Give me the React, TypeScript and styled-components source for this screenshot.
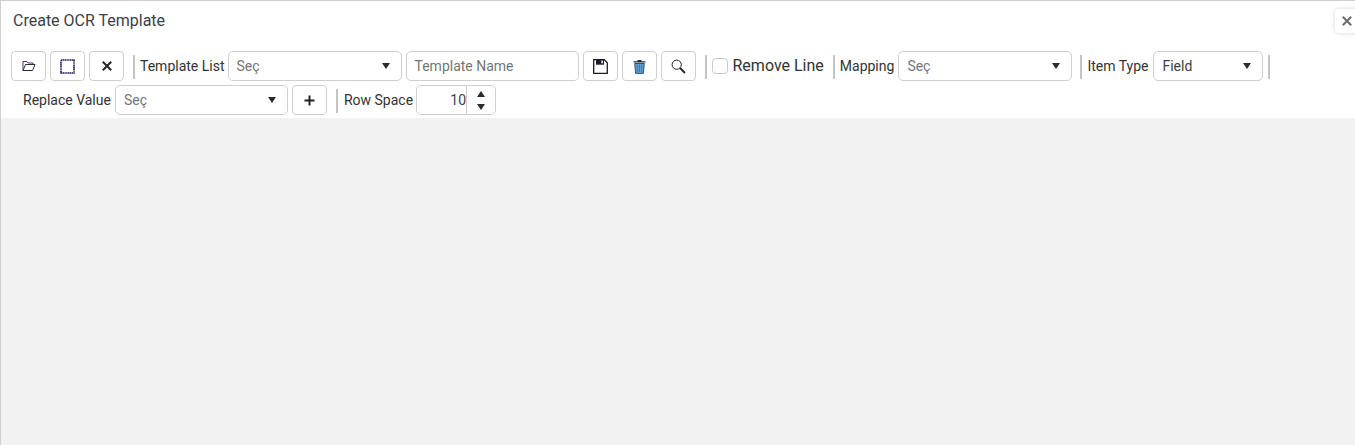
import React from "react";
import styled, { createGlobalStyle } from "styled-components";

const Global = createGlobalStyle`
  html, body { margin: 0; padding: 0; background: #fff; }
  body { font-family: Roboto, "Liberation Sans", sans-serif; color: #333; }
`;

const Page = styled.div`
  width: 1355px;
  height: 445px;
  box-sizing: border-box;
  border-top: 1px solid #cfcfcf;
  border-left: 1px solid #cfcfcf;
  display: flex;
  flex-direction: column;
  position: relative;
  overflow: hidden;
`;

const Header = styled.div`
  height: 50px;
  padding: 10px 0 0 12px;
  box-sizing: border-box;
  font-size: 16px;
  line-height: 19px;
  color: #3a3f44;
`;

const CloseButton = styled.button`
  position: absolute;
  top: 8px;
  right: -8px;
  width: 28px;
  height: 24px;
  padding: 0 5px 0 0;
  border: 0;
  border-radius: 4px;
  background: #fff;
  box-shadow: 0 0 5px rgba(0, 0, 0, 0.16);
  display: flex;
  align-items: center;
  justify-content: center;
`;

const Toolbar = styled.div`
  display: flex;
  flex-wrap: wrap;
  align-items: center;
  row-gap: 4px;
  padding: 0 0 3px 10px;
  background: #fff;
`;

const IconButton = styled.button`
  width: 35px;
  height: 30px;
  margin-right: 4px;
  padding: 0;
  box-sizing: border-box;
  background: #fff;
  border: 1px solid #cfcfcf;
  border-radius: 4px;
  display: flex;
  align-items: center;
  justify-content: center;
  flex: none;
`;

const Separator = styled.span<{ $before?: number; $after?: number }>`
  width: 2px;
  height: 24px;
  background: #c4c4c4;
  flex: none;
  margin-top: 2px;
  margin-left: ${(p) => p.$before ?? 5}px;
  margin-right: ${(p) => p.$after ?? 5}px;
`;

const Label = styled.label<{ $indent?: number; $gap?: number }>`
  font-size: 14px;
  line-height: 30px;
  color: #333;
  margin-left: ${(p) => p.$indent ?? 0}px;
  margin-right: ${(p) => p.$gap ?? 3}px;
  white-space: nowrap;
  flex: none;
`;

const SelectBox = styled.div<{ $width: number }>`
  width: ${(p) => p.$width}px;
  height: 30px;
  margin-right: 4px;
  box-sizing: border-box;
  border: 1px solid #cfcfcf;
  border-radius: 5px;
  background: #fff;
  display: flex;
  align-items: center;
  flex: none;
`;

const SelectValue = styled.span<{ $muted?: boolean }>`
  flex: 1;
  padding-left: 8px;
  font-size: 14px;
  color: ${(p) => (p.$muted ? "#757575" : "#3a3f44")};
`;

const Caret = styled.span`
  width: 0;
  height: 0;
  margin-right: 11px;
  border-left: 4px solid transparent;
  border-right: 4px solid transparent;
  border-top: 6px solid #2b2b2b;
`;

const TextBox = styled.div`
  width: 173px;
  height: 30px;
  margin-right: 4px;
  box-sizing: border-box;
  border: 1px solid #cfcfcf;
  border-radius: 5px;
  padding-left: 8px;
  font-size: 14px;
  line-height: 28px;
  color: #757575;
  flex: none;
`;

const CheckGroup = styled.div`
  display: flex;
  align-items: center;
  gap: 5px;
  flex: none;
`;

const CheckBox = styled.span`
  width: 16px;
  height: 16px;
  box-sizing: border-box;
  border: 1px solid #c9c9c9;
  border-radius: 4px;
  background: #fff;
`;

const CheckLabel = styled.span`
  font-size: 16px;
  line-height: 30px;
  color: #333;
`;

const Spinner = styled.div`
  width: 80px;
  height: 30px;
  box-sizing: border-box;
  border: 1px solid #cfcfcf;
  border-radius: 5px;
  display: flex;
  flex: none;
`;

const SpinnerValue = styled.span`
  width: 50px;
  box-sizing: border-box;
  border-right: 1px solid #cfcfcf;
  text-align: right;
  font-size: 14px;
  line-height: 28px;
  color: #3a3f44;
`;

const SpinnerArrows = styled.span`
  flex: 1;
  display: flex;
  flex-direction: column;
  align-items: center;
  justify-content: center;
  gap: 7px;
`;

const Arrow = styled.span<{ $up?: boolean }>`
  width: 0;
  height: 0;
  border-left: 4px solid transparent;
  border-right: 4px solid transparent;
  border-top: ${(p) => (p.$up ? "0" : "6px solid #2b2b2b")};
  border-bottom: ${(p) => (p.$up ? "6px solid #2b2b2b" : "0")};
`;

const Canvas = styled.div`
  flex: 1;
  background: #f2f2f2;
`;

const FolderIcon = () => (
  <svg width="14" height="12" viewBox="0 0 14 12" fill="none" stroke="#2a2a3a" strokeWidth="1">
    <path d="M1 10.5V1.5h4l1 1.5h5v1.5" stroke="#5a2a6a" />
    <path d="M1 10.5h9.5L13 4.5H3.5L1 10.5z" />
  </svg>
);
const SquareIcon = () => (
  <svg width="15" height="15" viewBox="0 0 15 15" fill="none">
    <rect x="1" y="1" width="13" height="13" stroke="#2a1a5a" strokeWidth="1.6" strokeDasharray="1.4 0.4" />
  </svg>
);
const CrossIcon = ({ color = "#222", size = 10, w = 2 }: { color?: string; size?: number; w?: number }) => (
  <svg width={size} height={size} viewBox="0 0 10 10" stroke={color} strokeWidth={w}>
    <path d="M0.8 0.8l8.4 8.4M9.2 0.8L0.8 9.2" />
  </svg>
);
const SaveIcon = () => (
  <svg width="15" height="15" viewBox="0 0 15 15">
    <path d="M0.7 0.7h10.6l3 3v10.6H0.7z" fill="#fff" stroke="#1c1c2a" strokeWidth="1.3" />
    <rect x="3" y="0.7" width="8" height="5" fill="#1c1c2a" />
    <rect x="8.4" y="1.5" width="1.5" height="2.8" fill="#fff" />
  </svg>
);
const TrashIcon = () => (
  <svg width="13" height="15" viewBox="0 0 13 15">
    <path d="M4.5 1h4v1.2h4V3.6H.5V2.2h4z" fill="#23303a" />
    <path d="M1.7 4.5h9.6L10.4 14.4H2.6z" fill="#5fa3d6" stroke="#23303a" strokeWidth="0.8" />
    <path d="M4.4 5.6v7.6M6.5 5.6v7.6M8.6 5.6v7.6" stroke="#2d6f9f" strokeWidth="0.8" />
  </svg>
);
const SearchIcon = () => (
  <svg width="15" height="15" viewBox="0 0 15 15" fill="none" stroke="#222">
    <circle cx="5.7" cy="5.7" r="4.6" strokeWidth="1" />
    <path d="M9 9l5 5" strokeWidth="1.8" />
  </svg>
);
const PlusIcon = () => (
  <svg width="11" height="11" viewBox="0 0 11 11" stroke="#222" strokeWidth="2">
    <path d="M5.5 0.5v10M0.5 5.5h10" />
  </svg>
);

const Select = ({ width, value, muted }: { width: number; value: string; muted?: boolean }) => (
  <SelectBox $width={width}>
    <SelectValue $muted={muted}>{value}</SelectValue>
    <Caret />
  </SelectBox>
);

export default function App() {
  return (
    <Page>
      <Global />
      <Header>Create OCR Template</Header>
      <CloseButton aria-label="Close">
        <CrossIcon color="#6b6b6b" size={10} w={2} />
      </CloseButton>
      <Toolbar>
        <IconButton><FolderIcon /></IconButton>
        <IconButton><SquareIcon /></IconButton>
        <IconButton><CrossIcon /></IconButton>
        <Separator $before={5} />
        <Label>Template List</Label>
        <Select width={174} value="Seç" muted />
        <TextBox>Template Name</TextBox>
        <IconButton><SaveIcon /></IconButton>
        <IconButton><TrashIcon /></IconButton>
        <IconButton><SearchIcon /></IconButton>
        <Separator $before={5} />
        <CheckGroup>
          <CheckBox />
          <CheckLabel>Remove Line</CheckLabel>
        </CheckGroup>
        <Separator $before={9} />
        <Label $gap={4}>Mapping</Label>
        <Select width={174} value="Seç" muted />
        <Separator $before={4} />
        <Label $gap={5}>Item Type</Label>
        <Select width={110} value="Field" />
        <Separator $before={1} $after={0} />
        <Label $indent={12} $gap={4}>Replace Value</Label>
        <Select width={173} value="Seç" muted />
        <IconButton><PlusIcon /></IconButton>
        <Separator $after={6} />
        <Label>Row Space</Label>
        <Spinner>
          <SpinnerValue>10</SpinnerValue>
          <SpinnerArrows>
            <Arrow $up />
            <Arrow />
          </SpinnerArrows>
        </Spinner>
      </Toolbar>
      <Canvas />
    </Page>
  );
}
